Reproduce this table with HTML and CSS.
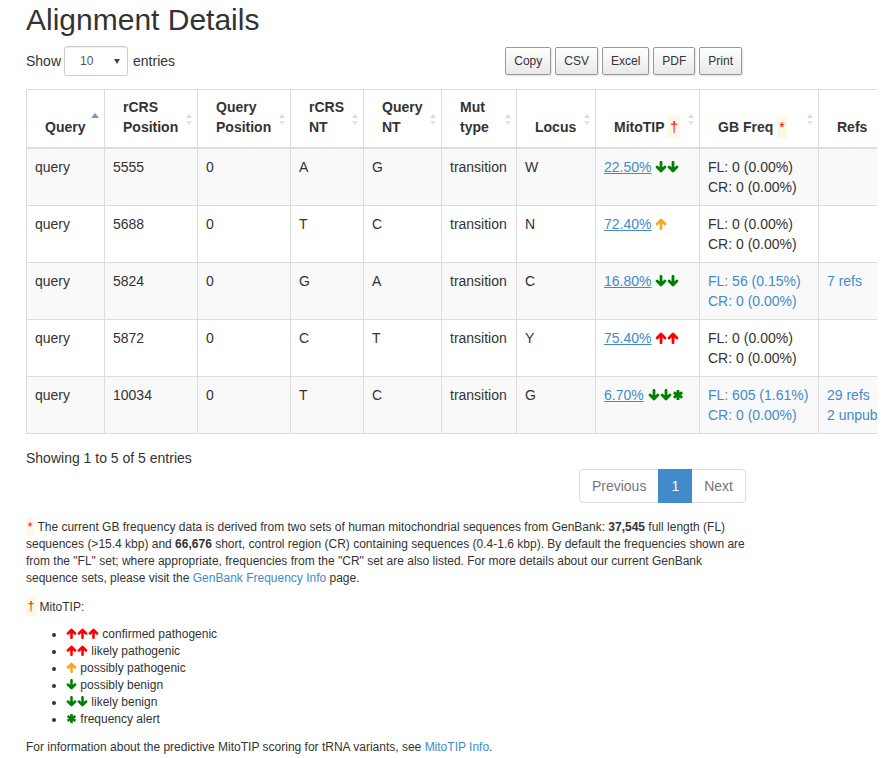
FILE: index.html
```html
<!DOCTYPE html>
<html lang="en">
<head>
<meta charset="utf-8">
<title>Alignment Details</title>
<link rel="stylesheet" href="styles.css">
</head>
<body>
<svg class="defs" aria-hidden="true">
  <defs>
    <symbol id="i-down" viewBox="0 0 12 12"><path d="M6 1.3V9.8M2.1 6L6 9.9L9.9 6" fill="none" stroke="currentColor" stroke-width="2.8" stroke-linecap="round" stroke-linejoin="round"/></symbol>
    <symbol id="i-up" viewBox="0 0 12 12"><path d="M6 10.7V2.2M2.1 6L6 2.1L9.9 6" fill="none" stroke="currentColor" stroke-width="2.8" stroke-linecap="round" stroke-linejoin="round"/></symbol>
    <symbol id="i-ast" viewBox="0 0 12 12"><path d="M6 1V11M1.7 3.5L10.3 8.5M1.7 8.5L10.3 3.5" fill="none" stroke="currentColor" stroke-width="2.8"/></symbol>
  </defs>
</svg>
<div class="page">
  <h2 class="title">Alignment Details</h2>
  <div class="controls">
    <div class="length">Show <span class="select-wrap"><select class="select"><option>10</option><option>25</option><option>50</option><option>100</option></select></span> entries</div>
    <div class="buttons"><button class="dt-btn">Copy</button><button class="dt-btn">CSV</button><button class="dt-btn">Excel</button><button class="dt-btn">PDF</button><button class="dt-btn">Print</button></div>
  </div>
  <div class="table-clip">
    <table class="grid">
      <colgroup>
        <col class="c1"><col class="c2"><col class="c3"><col class="c4"><col class="c5"><col class="c6"><col class="c7"><col class="c8"><col class="c9"><col class="c10">
      </colgroup>
      <thead>
        <tr>
          <th class="sort asc">Query</th>
          <th class="sort">rCRS<br>Position</th>
          <th class="sort">Query<br>Position</th>
          <th class="sort">rCRS<br>NT</th>
          <th class="sort">Query<br>NT</th>
          <th class="sort">Mut<br>type</th>
          <th class="sort">Locus</th>
          <th class="sort">MitoTIP <mark class="mk">†</mark></th>
          <th class="sort">GB Freq <mark class="mk">*</mark></th>
          <th class="sort">Refs</th>
        </tr>
      </thead>
      <tbody>
        <tr>
          <td>query</td><td>5555</td><td>0</td><td>A</td><td>G</td><td>transition</td><td>W</td>
          <td><a class="score" href="#">22.50%</a> <span class="icons g"><svg class="ic"><use href="#i-down"/></svg><svg class="ic"><use href="#i-down"/></svg></span></td>
          <td>FL: 0 (0.00%)<br>CR: 0 (0.00%)</td><td></td>
        </tr>
        <tr>
          <td>query</td><td>5688</td><td>0</td><td>T</td><td>C</td><td>transition</td><td>N</td>
          <td><a class="score" href="#">72.40%</a> <span class="icons o"><svg class="ic"><use href="#i-up"/></svg></span></td>
          <td>FL: 0 (0.00%)<br>CR: 0 (0.00%)</td><td></td>
        </tr>
        <tr>
          <td>query</td><td>5824</td><td>0</td><td>G</td><td>A</td><td>transition</td><td>C</td>
          <td><a class="score" href="#">16.80%</a> <span class="icons g"><svg class="ic"><use href="#i-down"/></svg><svg class="ic"><use href="#i-down"/></svg></span></td>
          <td><a class="plain" href="#">FL: 56 (0.15%)<br>CR: 0 (0.00%)</a></td><td><a class="plain" href="#">7 refs</a></td>
        </tr>
        <tr>
          <td>query</td><td>5872</td><td>0</td><td>C</td><td>T</td><td>transition</td><td>Y</td>
          <td><a class="score" href="#">75.40%</a> <span class="icons r"><svg class="ic"><use href="#i-up"/></svg><svg class="ic"><use href="#i-up"/></svg></span></td>
          <td>FL: 0 (0.00%)<br>CR: 0 (0.00%)</td><td></td>
        </tr>
        <tr>
          <td>query</td><td>10034</td><td>0</td><td>T</td><td>C</td><td>transition</td><td>G</td>
          <td><a class="score" href="#">6.70%</a> <span class="icons g"><svg class="ic"><use href="#i-down"/></svg><svg class="ic"><use href="#i-down"/></svg><svg class="ic"><use href="#i-ast"/></svg></span></td>
          <td><a class="plain" href="#">FL: 605 (1.61%)<br>CR: 0 (0.00%)</a></td><td class="nowrap"><a class="plain" href="#">29 refs</a><br><a class="plain" href="#">2 unpub</a></td>
        </tr>
      </tbody>
    </table>
  </div>
  <div class="info">Showing 1 to 5 of 5 entries</div>
  <div class="pager-row">
    <ul class="pagination">
      <li class="pg disabled"><a href="#">Previous</a></li>
      <li class="pg active"><a href="#">1</a></li>
      <li class="pg disabled"><a href="#">Next</a></li>
    </ul>
  </div>
  <p class="note"><mark class="mk">*</mark> The current GB frequency data is derived from two sets of human mitochondrial sequences from GenBank: <b>37,545</b> full length (FL) sequences (&gt;15.4 kbp) and <b>66,676</b> short, control region (CR) containing sequences (0.4-1.6 kbp). By default the frequencies shown are from the "FL" set; where appropriate, frequencies from the "CR" set are also listed. For more details about our current GenBank sequence sets, please visit the <a class="plain" href="#">GenBank Frequency Info</a> page.</p>
  <p class="note"><mark class="mk">†</mark> MitoTIP:</p>
  <ul class="legend">
    <li><span class="icons r"><svg class="ic"><use href="#i-up"/></svg><svg class="ic"><use href="#i-up"/></svg><svg class="ic"><use href="#i-up"/></svg></span> confirmed pathogenic</li>
    <li><span class="icons r"><svg class="ic"><use href="#i-up"/></svg><svg class="ic"><use href="#i-up"/></svg></span> likely pathogenic</li>
    <li><span class="icons o"><svg class="ic"><use href="#i-up"/></svg></span> possibly pathogenic</li>
    <li><span class="icons g"><svg class="ic"><use href="#i-down"/></svg></span> possibly benign</li>
    <li><span class="icons g"><svg class="ic"><use href="#i-down"/></svg><svg class="ic"><use href="#i-down"/></svg></span> likely benign</li>
    <li><span class="icons g"><svg class="ic"><use href="#i-ast"/></svg></span> frequency alert</li>
  </ul>
  <p class="note last">For information about the predictive MitoTIP scoring for tRNA variants, see <a class="plain" href="#">MitoTIP Info</a>.</p>
</div>
</body>
</html>
```

FILE: styles.css
```css
* { box-sizing: border-box; }

html, body {
  margin: 0;
  padding: 0;
  background: #fff;
}

body {
  font-family: "Liberation Sans", Arial, sans-serif;
  font-size: 14px;
  line-height: 20px;
  color: #333;
}

.defs {
  position: absolute;
  width: 0;
  height: 0;
  overflow: hidden;
}

.page {
  width: 720px;
  margin-left: 26px;
}

.title {
  margin: 3px 0 0;
  font-size: 30px;
  line-height: 33px;
  font-weight: normal;
  color: #333;
}

.controls {
  display: flex;
  justify-content: space-between;
  align-items: center;
  margin-top: 10px;
  height: 30px;
}

.length {
  display: flex;
  align-items: center;
  gap: 4px;
}

.select-wrap {
  position: relative;
  display: inline-block;
  margin: 0 1px 0 -1px;
}

.select {
  appearance: none;
  -webkit-appearance: none;
  width: 64px;
  height: 30px;
  padding: 0 0 0 15px;
  font-family: "Liberation Sans", Arial, sans-serif;
  font-size: 12px;
  color: #555;
  background: #fff;
  border: 1px solid #ccc;
  border-radius: 3px;
  box-shadow: inset 0 1px 1px rgba(0, 0, 0, .075);
}

.select-wrap::after {
  content: "";
  position: absolute;
  right: 8px;
  top: 13px;
  border-left: 3.5px solid transparent;
  border-right: 3.5px solid transparent;
  border-top: 5px solid #444;
  pointer-events: none;
}

.buttons {
  display: flex;
  align-items: center;
}

.dt-btn {
  font-family: "Liberation Sans", Arial, sans-serif;
  font-size: 12px;
  line-height: 16px;
  padding: 5px 8px;
  margin: 0 4px 0 0;
  color: #333;
  border: 1px solid #999;
  border-radius: 2px;
  background: linear-gradient(to bottom, #ffffff 0%, #e9e9e9 100%);
  box-shadow: 1px 1px 2px rgba(0, 0, 0, .12);
  cursor: pointer;
}

.table-clip {
  width: 851px;
  overflow: hidden;
  margin-top: 13px;
}

.grid {
  width: 872px;
  table-layout: fixed;
  border-collapse: collapse;
  border: 1px solid #ddd;
}

.c1 { width: 78px; }
.c2 { width: 93px; }
.c3 { width: 93px; }
.c4 { width: 73px; }
.c5 { width: 78px; }
.c6 { width: 75px; }
.c7 { width: 79px; }
.c8 { width: 104px; }
.c9 { width: 119px; }
.c10 { width: 80px; }

.grid th,
.grid td {
  border: 1px solid #ddd;
}

.grid th {
  position: relative;
  padding: 7px 18px 10px;
  text-align: left;
  vertical-align: bottom;
  font-weight: bold;
  white-space: nowrap;
  border-bottom: 2px solid #ddd;
}

.grid td {
  padding: 8px;
  vertical-align: top;
  white-space: nowrap;
}

.grid tbody tr:nth-child(odd) td {
  background: #f9f9f9;
}

.sort::before,
.sort::after {
  content: "";
  position: absolute;
  right: 5px;
  border-left: 3.5px solid transparent;
  border-right: 3.5px solid transparent;
}

.sort::before {
  top: calc(50% - 5px);
  border-bottom: 4px solid #d9d9d9;
}

.sort::after {
  top: calc(50% + 2px);
  border-top: 4px solid #e4e4e4;
}

.sort.asc::after {
  display: none;
}

.sort.asc::before {
  top: calc(50% - 6px);
  border-left-width: 4px;
  border-right-width: 4px;
  border-bottom: 5px solid #7d93d6;
}

.mk {
  background: #fcf8e3;
  color: #f00;
  padding: .2em .15em;
  font-weight: normal;
}

a {
  color: #428bca;
}

.score {
  text-decoration: underline;
}

.plain {
  text-decoration: none;
}

.icons {
  display: inline-flex;
  vertical-align: -1px;
}

.ic {
  width: 12px;
  height: 12px;
}

.g { color: #008000; }
.o { color: #f6a623; }
.r { color: #f00; }

.info {
  padding-top: 14px;
  line-height: 20px;
}

.pager-row {
  display: flex;
  justify-content: flex-end;
  margin-top: 1px;
}

.pagination {
  display: flex;
  list-style: none;
  margin: 0;
  padding: 0;
}

.pg a {
  display: block;
  padding: 6px 12px;
  line-height: 20px;
  border: 1px solid #ddd;
  margin-left: -1px;
  color: #777;
  background: #fff;
  text-decoration: none;
}

.pg:first-child a {
  margin-left: 0;
  border-radius: 4px 0 0 4px;
}

.pg:last-child a {
  border-radius: 0 4px 4px 0;
}

.pg.active a {
  position: relative;
  z-index: 1;
  color: #fff;
  background: #428bca;
  border-color: #428bca;
}

.note {
  margin: 16px 0 11px;
  font-size: 12px;
  line-height: 17.14px;
}

.note + .note {
  margin-top: 0;
  margin-bottom: 10px;
}

.legend {
  margin: 0 0 10px;
  padding-left: 40px;
  font-size: 12px;
  line-height: 17.14px;
}

.legend .ic {
  width: 11px;
  height: 11px;
}

.legend .icons {
  vertical-align: -1px;
}

.note.last {
  margin: 0;
}

.nowrap {
  white-space: nowrap;
}
```
